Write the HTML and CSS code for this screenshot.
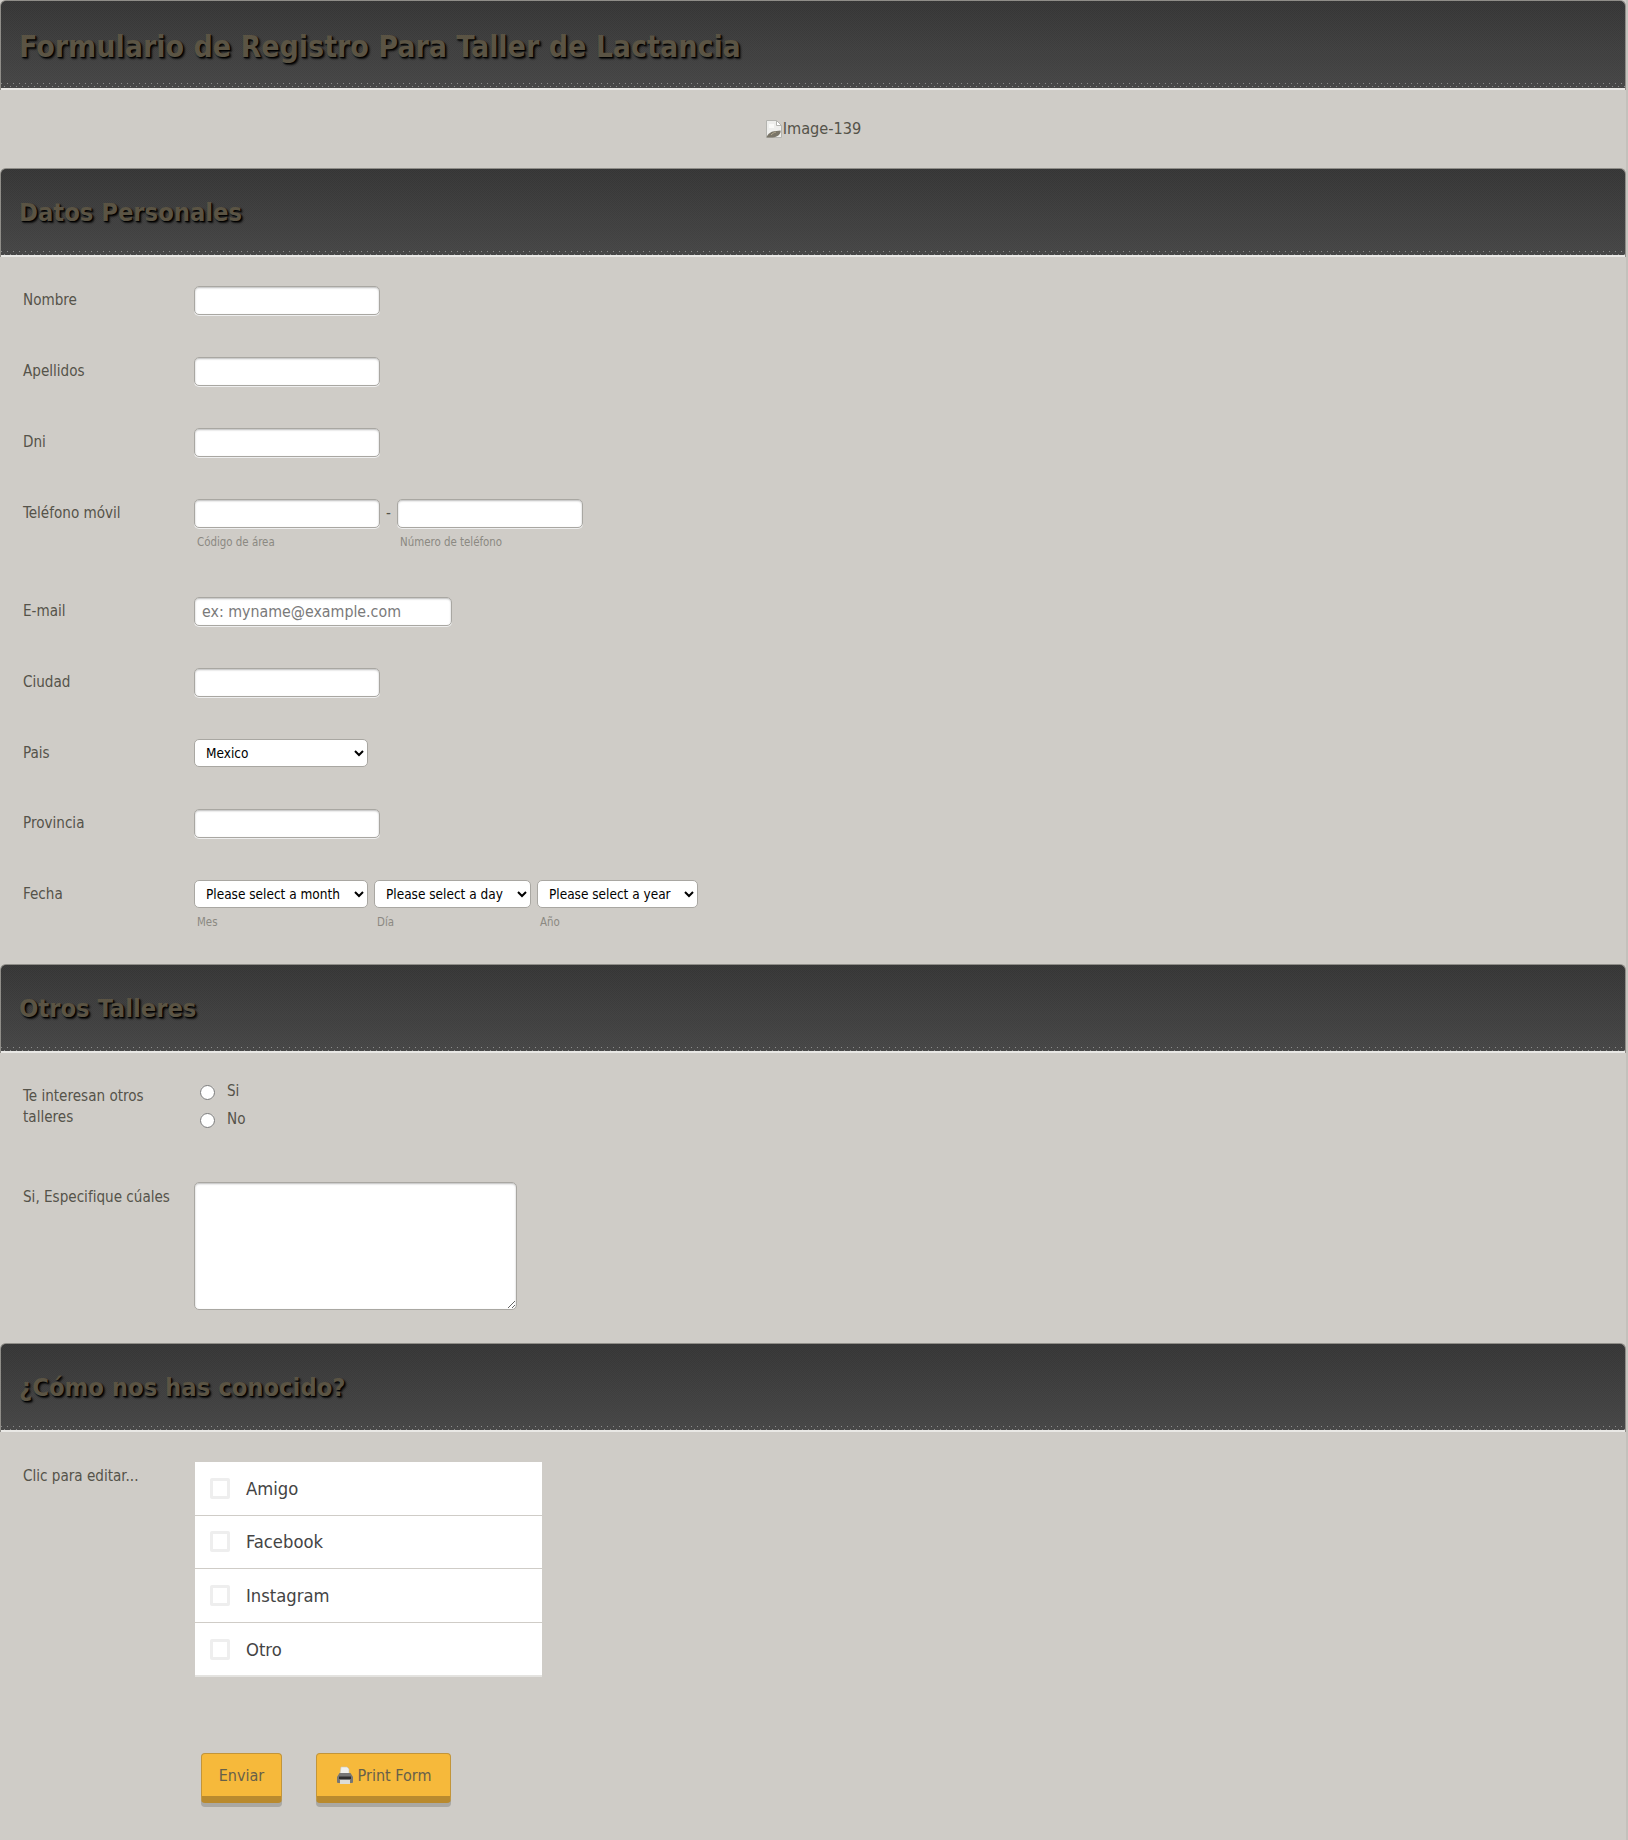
FILE: index.html
```html
<!DOCTYPE html>
<html lang="es">
<head>
<meta charset="utf-8">
<title>Formulario de Registro Para Taller de Lactancia</title>
<link rel="stylesheet" href="styles.css">
</head>
<body>
<form class="form">
  <header class="band band-first"><h1 class="title">Formulario de Registro Para Taller de Lactancia</h1></header>
  <div class="image-row">
    <span class="broken">
      <svg class="broken-icon" width="18" height="20" viewBox="0 0 18 20"><path d="M1.5 1.5h10l5 5v12h-15z" fill="#eeeeec" stroke="#b4b4b0"/><path d="M11.5 1.5v5h5z" fill="#fff" stroke="#b4b4b0"/><path d="M4 5h5v4H4z" fill="#fafaf8"/><path d="M1.5 18.5c1-4 6-7 10-6.500l4 -.5c1 3-3 7-8 7z" fill="#7a7568"/><path d="M6 16c1.500-1.500 3-2.500 5-3" fill="none" stroke="#b3a98f"/></svg>Image-139
    </span>
  </div>
  <header class="band"><h2 class="heading">Datos Personales</h2></header>
  <section class="section">
    <div class="line"><label class="label">Nombre</label><input class="field" type="text"></div>
    <div class="line"><label class="label">Apellidos</label><input class="field" type="text"></div>
    <div class="line"><label class="label">Dni</label><input class="field" type="text"></div>
    <div class="line line-sub">
      <label class="label">Teléfono móvil</label>
      <div class="group"><div class="stack"><input class="field" type="text"><span class="sub">Código de área</span></div><span class="dash">-</span><div class="stack"><input class="field" type="text"><span class="sub">Número de teléfono</span></div></div>
    </div>
    <div class="line"><label class="label">E-mail</label><input class="field field-mail" type="text" placeholder="ex: myname@example.com"></div>
    <div class="line"><label class="label">Ciudad</label><input class="field" type="text"></div>
    <div class="line line-country"><label class="label">Pais</label><select class="pick pick-m"><option>Mexico</option></select></div>
    <div class="line"><label class="label">Provincia</label><input class="field" type="text"></div>
    <div class="line line-date">
      <label class="label">Fecha</label>
      <div class="group group-date">
        <div class="stack"><select class="pick pick-m"><option>Please select a month</option></select><span class="sub">Mes</span></div>
        <div class="stack"><select class="pick pick-d"><option>Please select a day</option></select><span class="sub">Día</span></div>
        <div class="stack"><select class="pick pick-y"><option>Please select a year</option></select><span class="sub">Año</span></div>
      </div>
    </div>
  </section>
  <header class="band"><h2 class="heading">Otros Talleres</h2></header>
  <section class="section section-other">
    <div class="line line-radio">
      <label class="label label-top label-radio">Te interesan otros talleres</label>
      <div class="radios">
        <label class="radio"><input class="radio-input" type="radio" name="otros"><span>Si</span></label>
        <label class="radio"><input class="radio-input" type="radio" name="otros"><span>No</span></label>
      </div>
    </div>
    <div class="line line-area"><label class="label label-top">Si, Especifique cúales</label><textarea class="area"></textarea></div>
  </section>
  <header class="band"><h2 class="heading">¿Cómo nos has conocido?</h2></header>
  <section class="section section-how">
    <div class="line line-list">
      <label class="label label-top label-click">Clic para editar...</label>
      <ul class="checks">
        <li class="check"><span class="box"></span>Amigo</li>
        <li class="check"><span class="box"></span>Facebook</li>
        <li class="check"><span class="box"></span>Instagram</li>
        <li class="check"><span class="box"></span>Otro</li>
      </ul>
    </div>
    <div class="buttons">
      <button class="btn btn-send" type="button">Enviar</button>
      <button class="btn btn-print" type="button">
        <svg class="printer" width="18" height="19" viewBox="0 0 18 19"><path d="M5 1h6l2 2v5H4z" fill="#f0f0ec" stroke="#c9c6bd" stroke-width=".6"/><path d="M3.500 7h11l2.500 4v5a1 1 0 0 1-1 1H2a1 1 0 0 1-1-1v-5z" fill="#767676"/><path d="M3 10.500h12v2.500H3z" fill="#2e2e2e"/><path d="M4 14h10v4H4z" fill="#dcdcd8"/></svg>Print Form
      </button>
    </div>
  </section>
</form>
</body>
</html>
```
FILE: styles.css
```css
* { box-sizing: border-box; }
html, body { margin: 0; padding: 0; }
body {
  background: #cfccc7;
  color: #55534a;
  font-family: Tahoma, "DejaVu Sans Condensed", "DejaVu Sans", sans-serif;
  font-size: 15.1px;
}
.form { width: 1628px; height: 1840px; border-right: 2px solid #c4c1bc; overflow: hidden; }
.band {
  height: 89px;
  margin: 0;
  padding: 26px 18px 0;
  border: 1px solid #8f8d88;
  border-bottom: 0;
  border-radius: 6px 6px 0 0;
  background:
    linear-gradient(90deg, #8a8a8a 1px, transparent 1px) 0 82px / 6px 1px repeat-x,
    linear-gradient(90deg, #8a8a8a 1px, transparent 1px) 3px 85px / 6px 1px repeat-x,
    repeating-conic-gradient(rgba(255, 255, 255, .025) 0 25%, transparent 0 50%) 0 0 / 2px 2px,
    linear-gradient(#353535, #464646);
  box-shadow: inset 0 -2px 0 #e9e8e5;
}
.band-first { height: 90px; padding-top: 27px; }
.title, .heading {
  margin: 0;
  color: #5b5444;
  font-weight: 700;
  text-shadow: 1px 1px 1px #000, 2px 2px 2px #111;
}
.title { font-size: 30px; line-height: 38px; }
.heading { font-size: 25.3px; line-height: 36px; }
.image-row { height: 78px; padding-top: 27px; text-align: center; line-height: 24px; font-size: 16.2px; }
.broken { display: inline-flex; align-items: center; }
.broken-icon { flex: none; }
.section { padding: 29px 0 0 23px; }
.line { display: flex; align-items: flex-start; height: 71px; }
.line-sub { height: 98px; }
.line-country { height: 70px; }
.line-date { height: 84px; }
.label { width: 171px; flex: none; line-height: 24px; padding-top: 2px; }
.label-top { padding-top: 0; width: 150px; margin: 5px 21px 0 0; line-height: 21px; }
.label-radio { margin-top: 7px; }
.label-click { margin-top: 4px; }
.field {
  width: 186px;
  height: 29px;
  padding: 0 7px;
  background: #fff;
  border: 1px solid #a9a7a2;
  border-radius: 5px;
  box-shadow: inset 0 1px 2px #bbb, 0 1px 0 #eee;
  font: 15.8px Tahoma, "DejaVu Sans Condensed", sans-serif;
  color: #555;
}
.field-mail { width: 258px; }
.field::placeholder { color: #7a7a7a; opacity: 1; }
.group { display: flex; align-items: flex-start; }
.group-date { gap: 6px; }
.stack { display: flex; flex-direction: column; }
.dash { width: 17px; text-align: center; line-height: 29px; }
.sub { padding: 6px 0 0 3px; font-size: 11.4px; line-height: 16px; color: #8b8982; }
.pick {
  height: 28px;
  padding: 0 0 0 7px;
  background: #fff;
  color: #000;
  border: 1px solid #a9a7a2;
  border-radius: 5px;
  font: 13.5px Tahoma, "DejaVu Sans Condensed", sans-serif;
}
.pick-m { width: 174px; }
.pick-d { width: 157px; }
.pick-y { width: 161px; }
.section-other { padding-top: 26px; }
.line-radio { height: 103px; }
.radios { display: flex; flex-direction: column; gap: 4px; }
.radio { display: flex; align-items: center; height: 24px; padding-left: 5px; }
.radio-input { width: 15px; height: 15px; margin: 3px 12px 0 1px; }
.line-area { height: 161px; }
.area {
  width: 323px;
  height: 128px;
  background: #fff;
  border: 1px solid #a9a7a2;
  border-radius: 5px;
  box-shadow: inset 0 1px 2px #bbb;
}
.section-how { padding-top: 30px; }
.line-list { height: 291px; }
.checks { width: 347px; height: 215px; margin: 0 0 0 1px; padding: 0; list-style: none; background: #fff; border-bottom: 2px solid #e4e3e0; }
.check {
  display: flex;
  align-items: center;
  height: 53.5px;
  padding-left: 15px;
  border-bottom: 1px solid #cfccc7;
  font-size: 18.25px;
  color: #444;
}
.check:last-child { border-bottom: 0; }
.box { width: 20px; height: 21px; margin-right: 16px; border: 3px solid #eee; border-radius: 2px; }
.buttons { display: flex; gap: 34px; padding-left: 178px; }
.btn {
  display: flex;
  align-items: center;
  justify-content: center;
  height: 50px;
  padding: 0;
  background: #f6b93b;
  color: #66604a;
  border: 1px solid #c2953a;
  border-bottom: 7px solid #b98a2e;
  border-radius: 4px;
  box-shadow: 0 4px 0 #aaa8a3;
  font: 16px Tahoma, "DejaVu Sans Condensed", sans-serif;
}
.btn-send { width: 81px; }
.btn-print { width: 135px; }
.printer { margin-right: 4px; }
```
